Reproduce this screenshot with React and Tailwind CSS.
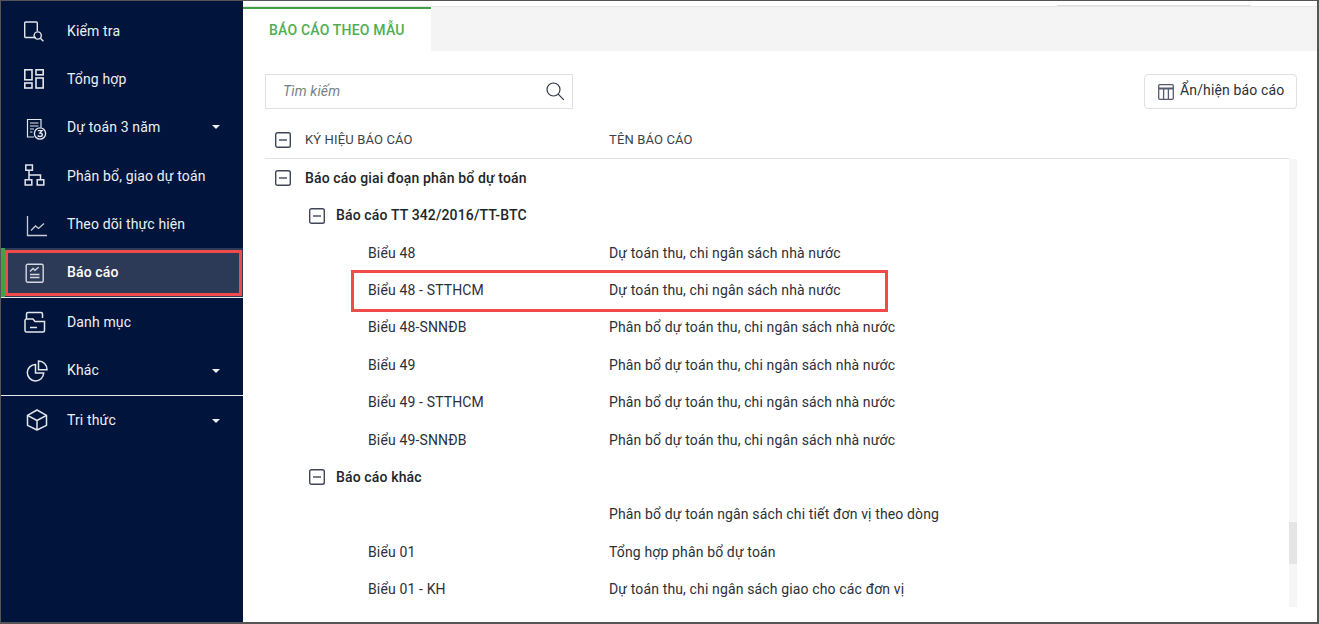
import React from 'react';

const IconCheck = () => (
  <svg width="22" height="22" viewBox="0 0 22 22" fill="none" stroke="#e4e6ea" strokeWidth="1.4">
    <path d="M14 17.5H3.7a1 1 0 0 1-1-1V3a1 1 0 0 1 1-1h10.6a1 1 0 0 1 1 1v8" />
    <circle cx="15.7" cy="15.5" r="3.6" />
    <path d="M18.4 18.2l3 3" />
  </svg>
);
const IconGrid = () => (
  <svg width="22" height="22" viewBox="0 0 22 22" fill="none" stroke="#e4e6ea" strokeWidth="1.6">
    <rect x="1.8" y="1.8" width="7.2" height="10" />
    <rect x="13" y="1.8" width="7.2" height="5" />
    <rect x="1.8" y="15" width="7.2" height="5" />
    <rect x="13" y="10" width="7.2" height="10" />
  </svg>
);
const IconThree = () => (
  <svg width="22" height="22" viewBox="0 0 22 22" fill="none" stroke="#e4e6ea" strokeWidth="1.2">
    <path d="M9 19H2.5V1.500h13.500v8" />
    <path d="M5 5h8.500M5 8h8.500M5 11h4M5 14h2.500" />
    <circle cx="15" cy="15.500" r="5.600" strokeWidth="1.400" />
    <path d="M12.800 12.600h4.200l-2.100 2.500c1.600 0 2.400.7 2.400 1.600 0 1.100-1 1.800-2.300 1.800-1 0-1.800-.3-2.300-1" strokeWidth="1.400" />
  </svg>
);
const IconTree = () => (
  <svg width="22" height="22" viewBox="0 0 22 22" fill="none" stroke="#e4e6ea" strokeWidth="1.5">
    <rect x="1.800" y="1" width="6.600" height="5.200" />
    <rect x="1.200" y="15.800" width="6.600" height="5.200" />
    <rect x="13.200" y="15.800" width="6.600" height="5.200" />
    <path d="M5 6.200v9.600M5 11h11.500v4.800" />
  </svg>
);
const IconLine = () => (
  <svg width="22" height="22" viewBox="0 0 22 22" fill="none" stroke="#c9ccd4" strokeWidth="1.3">
    <path d="M1.500 1v19.500H21" />
    <path d="M5 15.500l4.500-4.500 3 2.500 5.500-5" />
  </svg>
);
const IconReport = () => (
  <svg width="20" height="20" viewBox="0 0 20 20" fill="none" stroke="#d5d8df" strokeWidth="1.4">
    <rect x="1.200" y="1.200" width="17" height="18" rx="1.500" />
    <path d="M5 8.500l3-3 2 1.800 3.600-3M5 11.500h9.500M5 14.500h9.500" />
  </svg>
);
const IconFolder = () => (
  <svg width="22" height="22" viewBox="0 0 22 22" fill="none" stroke="#e4e6ea" strokeWidth="1.5">
    <path d="M2.500 8V3a1.500 1.500 0 0 1 1.500-1.500h13a1.500 1.500 0 0 1 1.500 1.500v4" />
    <path d="M1 9.500A1.500 1.500 0 0 1 2.500 8H9l2 2.500h9.500v9a1.500 1.500 0 0 1-1.500 1.500H2.500A1.500 1.500 0 0 1 1 19.500z" />
    <path d="M6 16.500h7" />
  </svg>
);
const IconPie = () => (
  <svg width="22" height="22" viewBox="0 0 22 22" fill="none" stroke="#e4e6ea" strokeWidth="1.5">
    <path d="M9.500 4.500a8.200 8.200 0 1 0 8.200 8.500H9.500z" />
    <path d="M12.500 1a8.500 8.500 0 0 1 8.500 8.700h-8.500z" />
  </svg>
);
const IconBox = () => (
  <svg width="22" height="22" viewBox="0 0 22 22" fill="none" stroke="#e4e6ea" strokeWidth="1.5" strokeLinejoin="round">
    <path d="M11 1l9.500 5.300v10L11 21l-9.500-4.700v-10z" />
    <path d="M1.500 6.300L11 11.500l9.500-5.200M11 11.500V21" />
  </svg>
);

const Caret = () => (
  <span className="ml-auto mr-[23px] w-0 h-0 border-x-[4px] border-x-transparent border-t-[4px] border-t-[#eceef2]"></span>
);

const MinusBox = () => (
  <svg className="shrink-0" width="16" height="16" viewBox="0 0 16 16" fill="none" stroke="#3f4657" strokeWidth="1.4">
    <rect x="0.700" y="0.700" width="14.600" height="14.600" rx="1.800" />
    <path d="M4 8h8" />
  </svg>
);

const menu = [
  { label: 'Kiểm tra', icon: <IconCheck />, h: 'h-[48px]', x: 'pl-[21px]' },
  { label: 'Tổng hợp', icon: <IconGrid />, h: 'h-[48px]' },
  { label: 'Dự toán 3 năm', icon: <IconThree />, caret: true, h: 'h-[48px]', x: 'pl-[24px] pt-[3px]' },
  { label: 'Phân bổ, giao dự toán', icon: <IconTree />, h: 'h-[50px]', x: 'pl-[23px] pb-[3px]' },
  { label: 'Theo dõi thực hiện', icon: <IconLine />, h: 'h-[47px]', x: 'pl-[25px] pt-[2px]' },
];

const menu2 = [
  { label: 'Danh mục', icon: <IconFolder />, h: 'h-[48px]', x: 'pl-[23px]' },
  { label: 'Khác', icon: <IconPie />, caret: true, h: 'h-[49px]', x: 'pl-[25px]' },
];

const MenuRow = ({ item }) => (
  <div className={`flex items-center text-[14px] text-[#eef0f4] ${item.h}`}>
    <span className={`w-[66px] shrink-0 flex items-center ${item.x || 'pl-[22px]'}`}>{item.icon}</span>
    <span>{item.label}</span>
    {item.caret && <Caret />}
  </div>
);

const rows = [
  { type: 'g1', code: 'Báo cáo giai đoạn phân bổ dự toán' },
  { type: 'g2', code: 'Báo cáo TT 342/2016/TT-BTC' },
  { code: 'Biểu 48', name: 'Dự toán thu, chi ngân sách nhà nước' },
  { code: 'Biểu 48 - STTHCM', name: 'Dự toán thu, chi ngân sách nhà nước', marked: true },
  { code: 'Biểu 48-SNNĐB', name: 'Phân bổ dự toán thu, chi ngân sách nhà nước' },
  { code: 'Biểu 49', name: 'Phân bổ dự toán thu, chi ngân sách nhà nước' },
  { code: 'Biểu 49 - STTHCM', name: 'Phân bổ dự toán thu, chi ngân sách nhà nước' },
  { code: 'Biểu 49-SNNĐB', name: 'Phân bổ dự toán thu, chi ngân sách nhà nước' },
  { type: 'g2', code: 'Báo cáo khác' },
  { code: '', name: 'Phân bổ dự toán ngân sách chi tiết đơn vị theo dòng' },
  { code: 'Biểu 01', name: 'Tổng hợp phân bổ dự toán' },
  { code: 'Biểu 01 - KH', name: 'Dự toán thu, chi ngân sách giao cho các đơn vị' },
];

const TableRow = ({ row }) => {
  if (row.type === 'g1') {
    return (
      <div className="h-[37.4px] flex items-center pl-[10px] gap-[14px] font-medium text-[#212529]">
        <MinusBox />
        <span>{row.code}</span>
      </div>
    );
  }
  if (row.type === 'g2') {
    return (
      <div className="h-[37.4px] flex items-center pl-[44px] gap-[11px] font-medium text-[#212529]">
        <MinusBox />
        <span>{row.code}</span>
      </div>
    );
  }
  return (
    <div className="h-[37.4px] flex items-center text-[#2b2f38] relative">
      <span className="w-[344px] pl-[103px] shrink-0">{row.code}</span>
      <span>{row.name}</span>
      {row.marked && (
        <span className="absolute left-[86px] top-[-2px] w-[537px] h-[42px] border-[3px] border-[#f04a4a]"></span>
      )}
    </div>
  );
};

export default function App() {
  return (
    <div className="w-[1319px] h-[624px] flex overflow-hidden bg-white border-t border-l border-r-2 border-b-2 border-[#555555] text-[14px] tracking-[0.14px] font-['Roboto',sans-serif]">
      <aside className="w-[242px] shrink-0 bg-[#00143c] pt-[6px]">
        {menu.map((m) => (
          <MenuRow key={m.label} item={m} />
        ))}
        <div className="h-[50px] flex bg-[#2c3a58] border-b border-[#e8e8e8]">
          <span className="w-[4px] bg-[#43a047]"></span>
          <div className="flex-1 flex items-center mt-[2px] mb-[1px] mr-[1px] border-[3px] border-[#f04a4a] text-[14px] font-medium text-white">
            <span className="w-[59px] pl-[17px] shrink-0 flex items-center"><IconReport /></span>
            <span className="pb-[1px]">Báo cáo</span>
          </div>
        </div>
        {menu2.map((m) => (
          <MenuRow key={m.label} item={m} />
        ))}
        <div className="h-px bg-[#e8e8e8]"></div>
        <MenuRow item={{ label: 'Tri thức', icon: <IconBox />, caret: true, h: 'h-[49px]', x: 'pl-[25px] pb-[2px]' }} />
      </aside>

      <main className="flex-1 min-w-0 flex flex-col">
        <div className="h-[5px] shrink-0 flex justify-end">
          <span className="w-[194px] h-[1px] mt-[4px] mr-[66px] bg-[#dedede]"></span>
        </div>
        <div className="h-[45px] shrink-0 bg-[#f4f4f4] border-t border-[#e6e6e6] flex">
          <div className="w-[188px] bg-white border-t-2 border-[#43a047] flex items-center pl-[26px] tracking-[0.2px] font-medium text-[#4caf50]">
            BÁO CÁO THEO MẪU
          </div>
        </div>

        <div className="pl-[22px] pr-[20px] flex-1 min-h-0 flex flex-col">
          <div className="mt-[23px] flex justify-between h-[35px] shrink-0">
            <div className="w-[308px] border border-[#e0e0e0] flex items-center pl-[17px] pr-[7px]">
              <span className="italic text-[#7b7f88]">Tìm kiếm</span>
              <svg className="ml-auto mb-[1px]" width="20" height="20" viewBox="0 0 20 20" fill="none" stroke="#2f3646" strokeWidth="1.2">
                <circle cx="8.500" cy="8.500" r="6.500" />
                <path d="M13.200 13.200l5.600 5.600" />
              </svg>
            </div>
            <div className="w-[153px] border border-[#e0e0e0] rounded-[4px] flex items-center pl-[13px] text-[#2b2f38] gap-[6px]">
              <svg width="16" height="16" viewBox="0 0 16 16" fill="none" stroke="#555c70" strokeWidth="1.3">
                <rect x="0.700" y="0.700" width="14.600" height="14.600" rx="1" />
                <path d="M1 4.500h14" strokeWidth="2" />
                <path d="M5.600 5v10M10.400 5v10" />
              </svg>
              <span className="pb-[3px]">Ẩn/hiện báo cáo</span>
            </div>
          </div>

          <div className="h-[50px] shrink-0 flex items-center pt-[12px] text-[13px] text-[#3a3f4b] border-b border-[#e2e2e2] mr-[8px]">
            <span className="w-[344px] shrink-0 flex items-center pl-[10px] gap-[14px]">
              <MinusBox />
              KÝ HIỆU BÁO CÁO
            </span>
            <span>TÊN BÁO CÁO</span>
          </div>

          <div className="h-[448px] shrink-0 flex overflow-hidden">
            <div className="flex-1 min-w-0 pt-[0.6px]">
              {rows.map((r, i) => (
                <TableRow key={i} row={r} />
              ))}
            </div>
            <div className="w-[8px] shrink-0 bg-[#f6f6f6] pt-[363px]">
              <div className="h-[42px] bg-[#e5e5e5]"></div>
            </div>
          </div>
        </div>
      </main>
    </div>
  );
}
